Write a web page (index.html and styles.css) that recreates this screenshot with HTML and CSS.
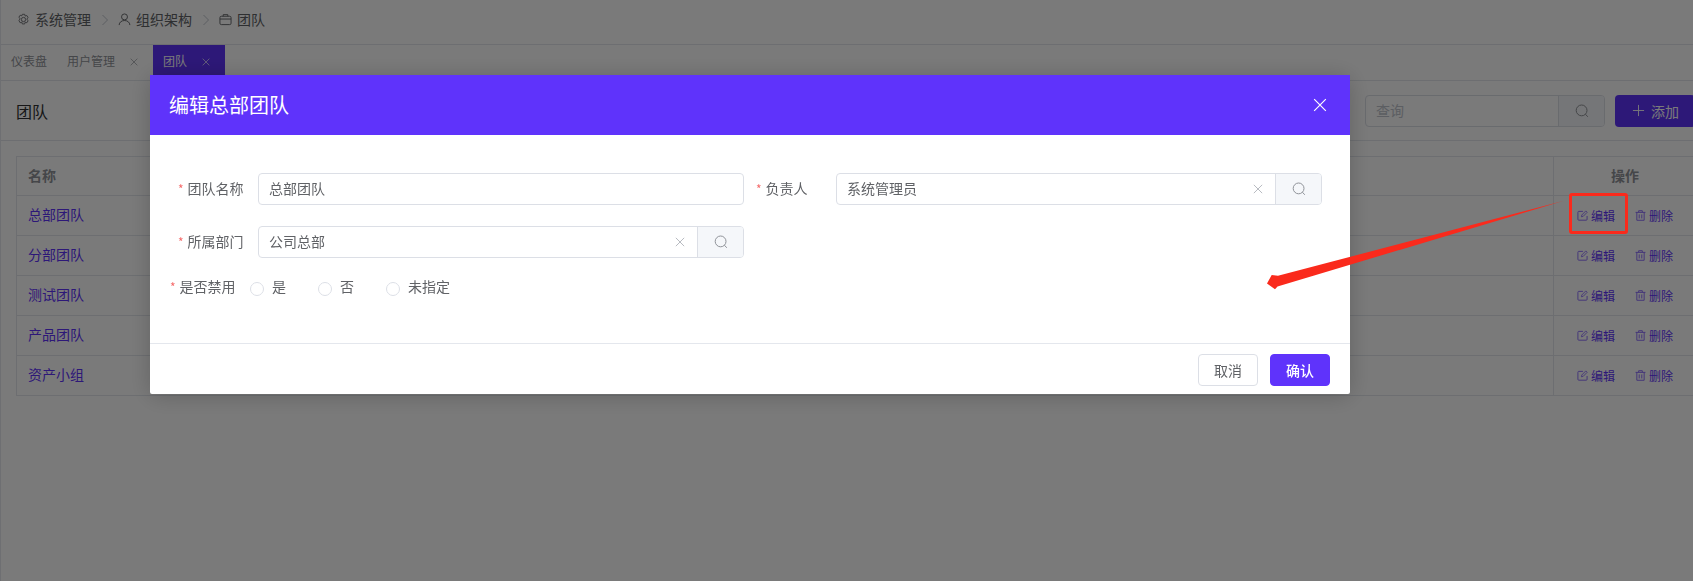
FILE: index.html
```html
<!DOCTYPE html>
<html lang="zh-CN">
<head>
<meta charset="utf-8">
<title>团队</title>
<link rel="stylesheet" href="styles.css">
</head>
<body>
<svg class="sprites" width="0" height="0" aria-hidden="true">
  <symbol id="i-search" viewBox="0 0 14 14"><circle cx="6.6" cy="6.4" r="5.4" fill="none" stroke="currentColor"/><path d="M10.4 10.2l2.4 2.6" fill="none" stroke="currentColor"/></symbol>
  <symbol id="i-close" viewBox="0 0 12 12"><path d="M1 1l10 10M11 1L1 11" fill="none" stroke="currentColor"/></symbol>
  <symbol id="i-edit" viewBox="0 0 12 12"><path d="M11 6.500v3.700a.9.9 0 0 1-.9.9H1.900a.9.9 0 0 1-.9-.9V2.400a.9.9 0 0 1 .9-.9h4.600" fill="none" stroke="currentColor"/><path d="M4.800 7.400l.4-1.900L9.600 1l1.500 1.500-4.400 4.500z" fill="none" stroke="currentColor" stroke-width=".9"/></symbol>
  <symbol id="i-trash" viewBox="0 0 12 12"><path d="M.6 2.600h10.800M4 2.400V.8h4v1.600M2 2.600v8.600h8V2.600M4.600 4.800v4.400M7.400 4.800v4.400" fill="none" stroke="currentColor"/></symbol>
</svg>

<div class="page">
  <nav class="crumbs">
    <svg class="crumb-icon" viewBox="0 0 14 14"><path d="M5.700.8h2.600l.5 1.900 1.800-.6 1.400 2.300-1.400 1.400v.4l1.400 1.400-1.400 2.300-1.800-.6-.5 1.900H5.700l-.5-1.900-1.800.6L2 7.300 3.400 5.900v-.4L2 4.100l1.400-2.300 1.800.6z" transform="translate(0 .6)" fill="none" stroke="currentColor" stroke-width=".9"/><circle cx="7" cy="7" r="2.300" fill="none" stroke="currentColor" stroke-width=".9"/></svg>
    <span class="crumb-text">系统管理</span>
    <svg class="crumb-sep" viewBox="0 0 8 12"><path d="M1.500 1l5 5-5 5" fill="none" stroke="currentColor"/></svg>
    <svg class="crumb-icon" viewBox="0 0 14 14"><circle cx="7" cy="4.200" r="3.200" fill="none" stroke="currentColor"/><path d="M1.200 13c.2-3 2.600-4.900 5.800-4.900s5.600 1.900 5.800 4.900" fill="none" stroke="currentColor"/></svg>
    <span class="crumb-text">组织架构</span>
    <svg class="crumb-sep" viewBox="0 0 8 12"><path d="M1.500 1l5 5-5 5" fill="none" stroke="currentColor"/></svg>
    <svg class="crumb-icon" viewBox="0 0 14 14"><rect x="1" y="3.500" width="12" height="9" rx="1.500" fill="none" stroke="currentColor"/><path d="M4.500 3.500V1.800h5v1.700M1 6.500h12" fill="none" stroke="currentColor"/></svg>
    <span class="crumb-text">团队</span>
  </nav>

  <div class="tabs">
    <span class="tab tab-home">仪表盘</span>
    <span class="tab">用户管理<svg class="tab-close"><use href="#i-close"/></svg></span>
    <span class="tab is-active">团队<svg class="tab-close"><use href="#i-close"/></svg></span>
  </div>

  <header class="page-head">
    <h1 class="page-title">团队</h1>
    <div class="page-tools">
      <div class="query">
        <span class="query-text">查询</span>
        <span class="query-btn"><svg class="icon-search"><use href="#i-search"/></svg></span>
      </div>
      <button class="add-btn" type="button"><svg class="add-plus" viewBox="0 0 14 14"><path d="M7 1v12M1 7h12" fill="none" stroke="currentColor"/></svg>添加</button>
    </div>
  </header>

  <main class="content">
    <table class="grid">
      <thead>
        <tr><th>名称</th><th class="col-actions">操作</th></tr>
      </thead>
      <tbody>
        <tr><td><a class="link">总部团队</a></td><td class="actions"><a class="act act-edit"><svg class="act-icon"><use href="#i-edit"/></svg>编辑</a><a class="act"><svg class="act-icon"><use href="#i-trash"/></svg>删除</a></td></tr>
        <tr><td><a class="link">分部团队</a></td><td class="actions"><a class="act act-edit"><svg class="act-icon"><use href="#i-edit"/></svg>编辑</a><a class="act"><svg class="act-icon"><use href="#i-trash"/></svg>删除</a></td></tr>
        <tr><td><a class="link">测试团队</a></td><td class="actions"><a class="act act-edit"><svg class="act-icon"><use href="#i-edit"/></svg>编辑</a><a class="act"><svg class="act-icon"><use href="#i-trash"/></svg>删除</a></td></tr>
        <tr><td><a class="link">产品团队</a></td><td class="actions"><a class="act act-edit"><svg class="act-icon"><use href="#i-edit"/></svg>编辑</a><a class="act"><svg class="act-icon"><use href="#i-trash"/></svg>删除</a></td></tr>
        <tr><td><a class="link">资产小组</a></td><td class="actions"><a class="act act-edit"><svg class="act-icon"><use href="#i-edit"/></svg>编辑</a><a class="act"><svg class="act-icon"><use href="#i-trash"/></svg>删除</a></td></tr>
      </tbody>
    </table>
  </main>
</div>

<div class="mask"></div>

<section class="dialog">
  <header class="dialog-head">
    <h2 class="dialog-title">编辑总部团队</h2>
    <svg class="dialog-close"><use href="#i-close"/></svg>
  </header>
  <div class="dialog-body">
    <div class="form-row">
      <div class="field">
        <label class="field-label"><i class="req">*</i>团队名称</label>
        <div class="input"><span class="input-text">总部团队</span></div>
      </div>
      <div class="field">
        <label class="field-label"><i class="req">*</i>负责人</label>
        <div class="input">
          <span class="input-text">系统管理员</span>
          <svg class="input-clear"><use href="#i-close"/></svg>
          <span class="input-btn"><svg class="icon-search"><use href="#i-search"/></svg></span>
        </div>
      </div>
    </div>
    <div class="form-row">
      <div class="field">
        <label class="field-label"><i class="req">*</i>所属部门</label>
        <div class="input">
          <span class="input-text">公司总部</span>
          <svg class="input-clear"><use href="#i-close"/></svg>
          <span class="input-btn"><svg class="icon-search"><use href="#i-search"/></svg></span>
        </div>
      </div>
    </div>
    <div class="radio-row">
      <label class="radio-label"><i class="req">*</i>是否禁用</label>
      <span class="radio"><i class="radio-dot"></i>是</span>
      <span class="radio"><i class="radio-dot"></i>否</span>
      <span class="radio"><i class="radio-dot"></i>未指定</span>
    </div>
  </div>
  <footer class="dialog-foot">
    <button class="btn" type="button">取消</button>
    <button class="btn btn-primary" type="button">确认</button>
  </footer>
</section>

<!-- hand-drawn callout over the edit action -->
<div class="callout-box"></div>
<svg class="callout-arrow" viewBox="0 0 1693 581"><polygon points="1563,201 1278,275.800 1271.700,275 1267,283.500 1275,289.300 1277.500,286.500"/></svg>
</body>
</html>
```
FILE: styles.css
```css
* { box-sizing: border-box; }

html, body {
  margin: 0;
  height: 100%;
  overflow: hidden;
  background: #fff;
  font-family: "Noto Sans CJK SC", "Liberation Sans", sans-serif;
  font-size: 14px;
  color: #606266;
}

.sprites { position: absolute; }

.page {
  width: 1711px;
  height: 581px;
  display: flex;
  flex-direction: column;
  border-left: 1px solid #e6e8ee;
}

/* breadcrumb bar */
.crumbs {
  height: 45px;
  flex: none;
  display: flex;
  align-items: center;
  padding-left: 16px;
  padding-bottom: 5px;
  border-bottom: 1px solid #e4e7ed;
  color: #606266;
}
.crumb-icon { width: 13px; height: 13px; margin-right: 5px; }
.crumb-text { position: relative; top: -1px; }
.crumb-sep { width: 8px; height: 12px; margin: 0 9px 0 10px; color: #c0c4cc; }

/* open page tabs */
.tabs {
  height: 36px;
  flex: none;
  display: flex;
  align-items: flex-start;
  border-bottom: 1px solid #e4e7ed;
  font-size: 12px;
  color: #909399;
}
.tab {
  height: 35px;
  display: flex;
  align-items: center;
  padding: 0 10px;
  padding-bottom: 5px;
}
.tab-close { width: 8px; height: 8px; margin: 4px 5px 0 15px; }
.tab.is-active {
  width: 72px;
  padding-right: 0;
  background: #5f33fb;
  color: #fff;
}

/* page title and tools */
.page-head {
  height: 60px;
  flex: none;
  display: flex;
  align-items: center;
  justify-content: space-between;
  padding: 0 16px 0 15px;
  border-bottom: 1px solid #e4e7ed;
}
.page-title {
  margin: 0;
  font-size: 16px;
  font-weight: 400;
  color: #303133;
}
.page-tools { display: flex; gap: 10px; }
.query {
  width: 240px;
  height: 32px;
  display: flex;
  align-items: center;
  justify-content: space-between;
  border: 1px solid #dcdfe6;
  border-radius: 4px;
  color: #c0c4cc;
}
.query-text { padding: 0 0 2px 10px; }
.query-btn {
  width: 46px;
  height: 30px;
  display: flex;
  align-items: center;
  justify-content: center;
  background: #f5f7fa;
  border-left: 1px solid #dcdfe6;
  color: #909399;
  border-radius: 0 3px 3px 0;
}
.icon-search { width: 14px; height: 14px; }
.add-btn {
  width: 80px;
  height: 32px;
  display: flex;
  align-items: center;
  padding: 0 0 0 17px;
  border: 0;
  border-radius: 4px;
  background: #5f33fb;
  color: #fff;
  font: inherit;
}
.add-plus { width: 13px; height: 13px; margin-right: 6px; }

/* data table */
.content { padding: 15px 16px 15px 15px; }
.grid {
  width: 100%;
  border-collapse: collapse;
  border: 1px solid #e4e7ed;
  table-layout: fixed;
}
.grid th, .grid td {
  height: 40px;
  padding: 0 11px;
  border: 1px solid #e4e7ed;
  border-left: 0;
  border-right: 0;
  text-align: left;
  font-size: 14px;
}
.grid td { padding-bottom: 3px; }
.grid th {
  height: 39px;
  padding-bottom: 2px;
  font-weight: 700;
  color: #909399;
}
.grid .col-actions {
  width: 141px;
  padding-left: 13px;
  text-align: center;
  border-left: 1px solid #e4e7ed;
}
.link { color: #5f33fb; }
.grid .actions {
  padding: 0 0 1px 23px;
  border-left: 1px solid #e4e7ed;
  font-size: 12px;
  white-space: nowrap;
}
.act { display: inline-flex; align-items: center; color: #5f33fb; }
.act-edit { margin-right: 20px; }
.act-icon { width: 11px; height: 11px; margin-right: 3px; opacity: .75; }

/* modal layer */
.mask {
  position: fixed;
  inset: 0;
  background: rgba(0, 0, 0, .52);
}
.dialog {
  position: fixed;
  left: 150px;
  top: 75px;
  width: 1200px;
  background: #fff;
  border-radius: 0 0 2px 2px;
  box-shadow: 0 2px 24px rgba(0, 0, 0, .2);
}
.dialog-head {
  height: 60px;
  display: flex;
  align-items: center;
  justify-content: space-between;
  padding: 0 23px 0 20px;
  background: #5f33fb;
  color: #fff;
}
.dialog-title { margin: 0 0 2px -1px; font-size: 20px; font-weight: 400; }
.dialog-close { width: 14px; height: 14px; }
.dialog-close, .tab-close, .input-clear { overflow: visible; }

.dialog-body {
  height: 208px;
  padding: 38px 0 0 16px;
}
.form-row { display: flex; margin-bottom: 21px; }
.field { width: 578px; display: flex; align-items: center; }
.field-label {
  width: 92px;
  flex: none;
  padding: 0 0 3px 12px;
  white-space: nowrap;
}
.req {
  font-style: normal;
  color: #f56c6c;
  margin-right: 4px;
  font-size: 12px;
}
.input {
  width: 486px;
  height: 32px;
  display: flex;
  align-items: center;
  border: 1px solid #dcdfe6;
  border-radius: 4px;
  background: #fff;
  overflow: hidden;
}
.input-text { flex: 1; padding: 0 0 2px 10px; }
.input-clear { width: 10px; height: 10px; margin-right: 12px; color: #a9adb5; }
.input-btn {
  width: 46px;
  height: 30px;
  display: flex;
  align-items: center;
  justify-content: center;
  background: #f5f7fa;
  border-left: 1px solid #dcdfe6;
  color: #909399;
}

.radio-row {
  display: flex;
  align-items: center;
  height: 20px;
  margin-top: -3px;
  padding-left: 4px;
}
.radio-label { width: 80px; flex: none; }
.radio {
  display: flex;
  align-items: center;
  width: 68px;
  white-space: nowrap;
}
.radio-dot {
  width: 14px;
  height: 14px;
  margin: 5px 8px 0 0;
  border: 1px solid #dcdfe6;
  border-radius: 50%;
}

.dialog-foot {
  height: 51px;
  display: flex;
  justify-content: flex-end;
  gap: 12px;
  padding: 10px 20px 0 0;
  border-top: 1px solid #e4e7ed;
}
.btn {
  width: 60px;
  height: 32px;
  padding: 0;
  border: 1px solid #dcdfe6;
  border-radius: 4px;
  background: #fff;
  color: #606266;
  font: inherit;
}
.btn-primary {
  background: #5f33fb;
  border-color: #5f33fb;
  color: #fff;
  font-weight: 500;
}

/* red annotation */
.callout-box {
  position: fixed;
  left: 1569px;
  top: 193px;
  width: 59px;
  height: 41px;
  border: 3px solid #fa2a1c;
  border-radius: 3px;
}
.callout-arrow {
  position: fixed;
  left: 0;
  top: 0;
  width: 1693px;
  height: 581px;
  fill: #fa2a1c;
  pointer-events: none;
}
```
